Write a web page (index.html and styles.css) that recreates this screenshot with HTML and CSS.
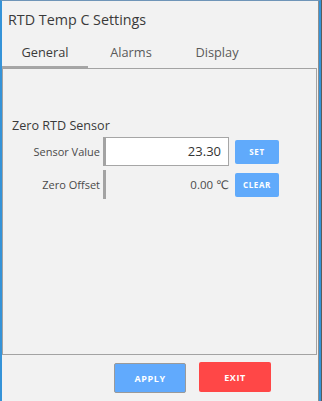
FILE: index.html
```html
<!DOCTYPE html>
<html>
	<head>
		<meta http-equiv="content-type" content="text/html;charset=UTF-8" />
		<link rel="stylesheet" href="styles.css">
	</head>
	<body>
		<div class="window">
			<div class="dialog">
				<div class="title">RTD Temp C Settings</div>
				<div class="tabs">
					<span class="tab active">General</span>
					<span class="tab">Alarms</span>
					<span class="tab">Display</span>
				</div>
				<div class="panel">
					<div class="heading">Zero RTD Sensor</div>
					<div class="row">
						<span class="label">Sensor Value</span>
						<div class="field boxed">23.30</div>
						<button class="Btn small">SET</button>
					</div>
					<div class="row">
						<span class="label">Zero Offset</span>
						<div class="field">0.00 &#8451;</div>
						<button class="Btn small">CLEAR</button>
					</div>
				</div>
				<div class="footer">
					<button class="Btn big apply">APPLY</button>
					<button class="Btn big exit">EXIT</button>
				</div>
			</div>
		</div>
	</body>
</html>
```
FILE: styles.css
```css
body{
	margin:0;
	background:#5a5a5a;
	font-family:"Open Sans","DejaVu Sans",sans-serif;
}
.window{
	width:321px;
	height:401px;
	box-sizing:border-box;
	border-top:1px solid #6f95b8;
	border-left:2px solid #3593d8;
	border-right:2px solid #3593d8;
	background:#f2f2f2;
}
.dialog{
	height:100%;
	display:flex;
	flex-direction:column;
	border-right:1px solid #8e8e8e;
}
.title{
	height:37px;
	line-height:38px;
	padding-left:6px;
	font-size:14.3px;
	color:#3a3a3a;
}
.tabs{
	height:30px;
	display:flex;
	flex-direction:row;
	align-items:stretch;
}
.tab{
	width:86px;
	box-sizing:border-box;
	text-align:center;
	font-size:12.8px;
	line-height:29px;
	color:#5a5a5a;
	border-bottom:2px solid transparent;
}
.tab.active{
	color:#3a3a3a;
	border-bottom-color:#a6a6a6;
}
.panel{
	flex-grow:1;
	margin-right:1px;
	border:1px solid #a3a3a3;
	padding:48px 0 0 0;
	display:flex;
	flex-direction:column;
	gap:4px;
}
.heading{
	padding-left:9px;
	font-size:12.6px;
	line-height:18px;
	color:#3a3a3a;
	margin-bottom:-2px;
}
.row{
	display:flex;
	flex-direction:row;
	align-items:center;
	height:29px;
}
.label{
	width:97px;
	text-align:right;
	font-size:11px;
	color:#4a4a4a;
	margin-right:3px;
}
.field{
	width:126px;
	height:29px;
	box-sizing:border-box;
	border-left:3px solid #a3a3a3;
	text-align:right;
	font-size:11.5px;
	line-height:29px;
	color:#4a4a4a;
}
.field.boxed{
	background:#fff;
	border-top:1px solid #a6a6a6;
	border-right:1px solid #a6a6a6;
	border-bottom:1px solid #a6a6a6;
	line-height:27px;
	padding-right:7px;
	font-size:13px;
	color:#333;
}
.Btn{
	border:none;
	outline:none;
	border-radius:2px;
	color:#fff;
	font-family:"Open Sans","DejaVu Sans",sans-serif;
	font-weight:bold;
	letter-spacing:0.6px;
	padding:0;
}
.small{
	width:44px;
	height:24px;
	margin-left:6px;
	background:#60aafb;
	font-size:8px;
}
.footer{
	height:46px;
	display:flex;
	flex-direction:row;
	align-items:center;
	padding-left:112px;
	gap:13px;
}
.big{
	width:72px;
	height:30px;
	font-size:9px;
}
.apply{
	background:#61aafd;
	border:1px solid #9a9a9a;
}
.exit{
	background:#ff4747;
	margin-top:-2px;
}
```
